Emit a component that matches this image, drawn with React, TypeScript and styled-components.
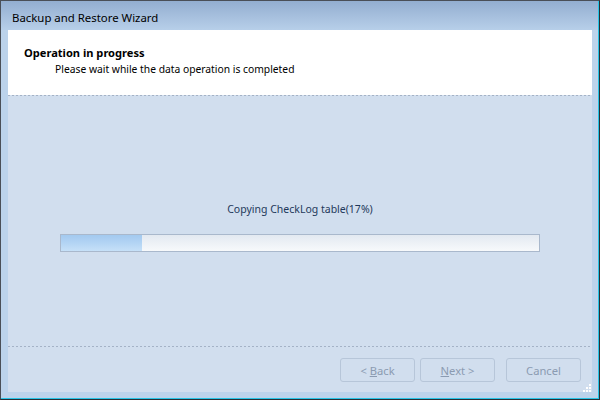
import React from "react";
import styled, { createGlobalStyle } from "styled-components";

const Global = createGlobalStyle`
  html, body { margin: 0; padding: 0; background: #ffffff; }
  body { font-family: "Noto Sans", "Open Sans", sans-serif; }
`;

const Window = styled.div`
  box-sizing: border-box;
  width: 600px;
  height: 400px;
  display: flex;
  flex-direction: column;
  border-top: 1px solid #4a4f57;
  border-left: 1px solid #4a4f57;
  border-right: 1px solid #2b2f35;
  border-bottom: 1px solid #2b2f35;
  box-shadow: inset -1px -1px 0 #27c4e6;
  background: #bcd3eb;
  overflow: hidden;
`;

const TitleBar = styled.div`
  height: 29px;
  flex: none;
  display: flex;
  align-items: center;
  padding: 4px 0 0 11px;
  box-sizing: border-box;
  background: linear-gradient(to bottom, #93aed0 0%, #a7c0de 55%, #b7cfe9 100%);
  font-size: 11.4px;
  color: #000;
  margin-right: 1px;
`;

const Frame = styled.div`
  flex: 1;
  display: flex;
  padding: 0 7px 7px 7px;
  min-height: 0;
`;

const Client = styled.div`
  flex: 1;
  display: flex;
  flex-direction: column;
  background: #d1deee;
`;

const Dashed = styled.div`
  height: 1px;
  flex: none;
  background: repeating-linear-gradient(to right, #a4b2c6 0 2px, transparent 2px 4px);
`;

const Header = styled.div`
  height: 65px;
  flex: none;
  background: #ffffff;
  display: flex;
  flex-direction: column;
  padding: 15px 0 0 16px;
  box-sizing: border-box;
`;

const HeaderTitle = styled.div`
  font-weight: bold;
  font-size: 11.1px;
  line-height: 16px;
  color: #000;
`;

const HeaderSub = styled.div`
  font-size: 10.3px;
  line-height: 16px;
  padding-left: 31px;
  color: #000;
`;

const Body = styled.div`
  flex: 1;
  display: flex;
  flex-direction: column;
  align-items: center;
  padding-top: 105px;
  box-sizing: border-box;
`;

const ProgressLabel = styled.div`
  font-size: 10.5px;
  line-height: 16px;
  color: #1e395b;
`;

const Track = styled.div`
  margin-top: 17px;
  box-sizing: border-box;
  width: 480px;
  height: 18px;
  border: 1px solid #a9b8cc;
  background: linear-gradient(to bottom, #e3e9f1 0%, #edf1f6 50%, #f7f9fb 100%);
  display: flex;
`;

const Fill = styled.div<{ $pct: number }>`
  width: ${(p) => p.$pct}%;
  height: 100%;
  background: linear-gradient(to bottom, #a3c9ef 0%, #b3d4f4 50%, #c6e0f8 100%);
`;

const Footer = styled.div`
  height: 45px;
  flex: none;
  display: flex;
  justify-content: flex-end;
  align-items: flex-start;
  padding: 11px 11px 0 0;
  box-sizing: border-box;
  position: relative;
`;

const Button = styled.div<{ $gap?: number }>`
  box-sizing: border-box;
  width: 75px;
  height: 24px;
  margin-left: ${(p) => p.$gap ?? 5}px;
  border: 1px solid #b7c6d9;
  border-radius: 3px;
  background: #d1deee;
  color: #8b9bb1;
  font-size: 11.2px;
  display: flex;
  align-items: center;
  justify-content: center;
`;

const U = styled.span`
  text-decoration: underline;
`;

const Grip = styled.svg`
  position: absolute;
  right: 1px;
  bottom: 0px;
`;

export default function App() {
  return (
    <>
      <Global />
      <Window>
        <TitleBar>Backup and Restore Wizard</TitleBar>
        <Frame>
          <Client>
            <Header>
              <HeaderTitle>Operation in progress</HeaderTitle>
              <HeaderSub>Please wait while the data operation is completed</HeaderSub>
            </Header>
            <Dashed />
            <Body>
              <ProgressLabel>Copying CheckLog table(17%)</ProgressLabel>
              <Track>
                <Fill $pct={17} />
              </Track>
            </Body>
            <Dashed />
            <Footer>
              <Button>
                &lt;&nbsp;<U>B</U>ack
              </Button>
              <Button>
                <U>N</U>ext &gt;
              </Button>
              <Button $gap={11}>Cancel</Button>
              <Grip width="8" height="8" viewBox="0 0 8 8">
                <g fill="#ffffff">
                  <rect x="6" y="0" width="2" height="2" />
                  <rect x="3" y="3" width="2" height="2" />
                  <rect x="6" y="3" width="2" height="2" />
                  <rect x="0" y="6" width="2" height="2" />
                  <rect x="3" y="6" width="2" height="2" />
                  <rect x="6" y="6" width="2" height="2" />
                </g>
              </Grip>
            </Footer>
          </Client>
        </Frame>
      </Window>
    </>
  );
}
